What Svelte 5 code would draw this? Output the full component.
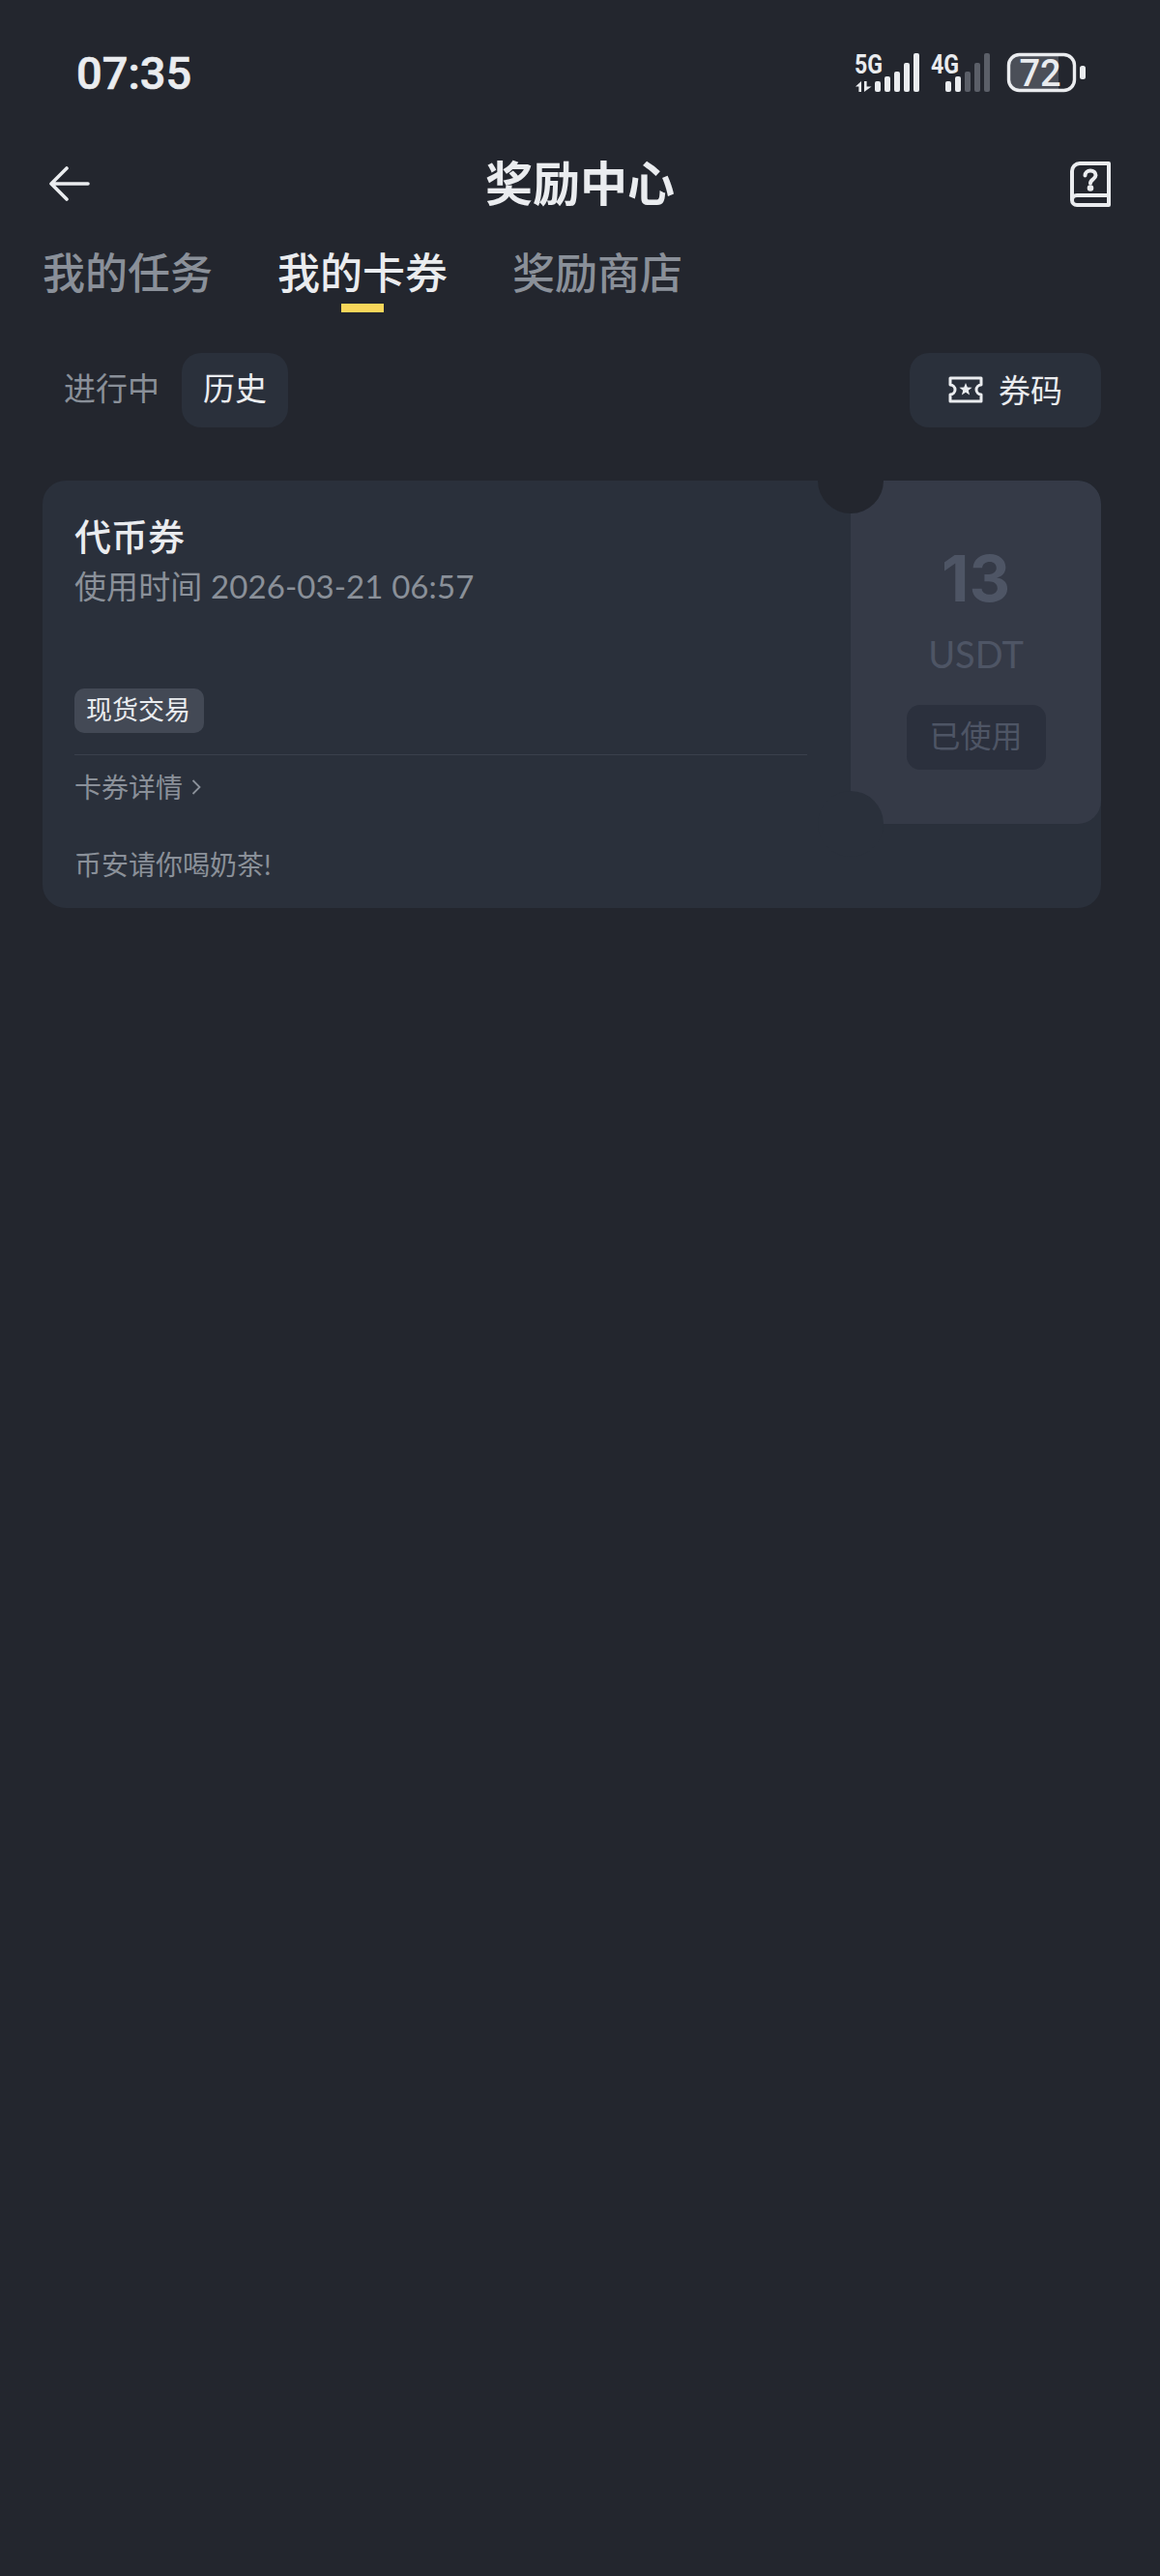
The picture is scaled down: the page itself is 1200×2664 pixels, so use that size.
<script>
	const tabs = [
		{ label: '我的任务', active: false },
		{ label: '我的卡券', active: true },
		{ label: '奖励商店', active: false }
	]
	const bars5g = [
		[905, 82],
		[915, 77],
		[925, 72],
		[935, 63],
		[945, 53]
	]
	const bars4g = [
		[978, 82, true],
		[988, 77, true],
		[998, 72, false],
		[1008, 63, false],
		[1018, 53, false]
	]
</script>

<div class="page">
	<div class="status">
		<span class="time">07:35</span>
		<svg class="status-icons" width="240" height="64" viewBox="884 41 240 64">
			<text x="884" y="74" class="net" textLength="29" lengthAdjust="spacingAndGlyphs">5G</text>
			<path d="M891 93h-2.600v-5.500h-3.400l6-5.500zM894 82h2.600v5.500h5l-7.600 5.500z" fill="#eaecef" />
			{#each bars5g as [x, y]}
				<rect {x} {y} width="6" height={93 - y} rx="2" fill="#eaecef" />
			{/each}
			<text x="963" y="74" class="net" textLength="29" lengthAdjust="spacingAndGlyphs">4G</text>
			{#each bars4g as [x, y, on]}
				<rect {x} {y} width="6" height={93 - y} rx="2" fill={on ? '#eaecef' : '#5b5f68'} />
			{/each}
			<path d="M1052 55h43v36h-43a8 8 0 0 1-8-8v-20a8 8 0 0 1 8-8z" fill="#4b4f58" />
			<rect x="1043.500" y="54.500" width="68" height="37" rx="11" fill="none" stroke="#eaecef" stroke-width="3.400" />
			<text x="1076" y="87" class="batt">72</text>
			<rect x="1117" y="66" width="6" height="14" rx="2.500" fill="#eaecef" />
		</svg>
	</div>

	<div class="nav">
		<svg class="nav-icon" width="42" height="36" viewBox="0 0 42 36" fill="none" stroke="#eaecef" stroke-width="3.600" stroke-linecap="round" stroke-linejoin="round">
			<path d="M40 18H3M18 2 2 18l16 16" />
		</svg>
		<h1>奖励中心</h1>
		<svg class="nav-icon" width="42" height="47" viewBox="0 0 42 47" fill="none" stroke="#eaecef" stroke-width="4" stroke-linejoin="round">
			<path d="M40 2H10a8 8 0 0 0-8 8v30a5 5 0 0 0 5 5h33zM2 40a5 5 0 0 1 5-5h33" />
			<path d="M15.500 14.500c0-3 2.400-5 5.500-5s5.500 2 5.500 4.800c0 4-5.500 4-5.500 8.200" stroke-linecap="round" />
			<circle cx="21" cy="27.500" r="1.300" fill="#eaecef" />
		</svg>
	</div>

	<div class="tabs">
		{#each tabs as tab}
			<div class="tab" class:active={tab.active}>{tab.label}</div>
		{/each}
	</div>

	<div class="filters">
		<div class="seg">
			<div class="seg-item">进行中</div>
			<div class="seg-item on">历史</div>
		</div>
		<div class="code-btn">
			<svg width="36" height="28" viewBox="0 0 36 28" fill="none" stroke="#eaecef" stroke-width="3" stroke-linejoin="round">
				<path d="M2 2h32v7a5 5 0 0 0 0 10v7H2v-7a5 5 0 0 0 0-10z" />
				<path d="m18 7 1.800 4.600 4.800.2-3.800 3 1.300 4.600-4.100-2.700-4.100 2.700 1.300-4.600-3.800-3 4.800-.2z" fill="#eaecef" stroke="none" />
			</svg>
			<span>券码</span>
		</div>
	</div>

	<div class="card">
		<div class="notch-top"></div>
		<div class="top">
			<div class="left">
				<div class="title">代币券</div>
				<div class="date">使用时间 2026-03-21 06:57</div>
				<div class="tag">现货交易</div>
				<div class="divider"></div>
				<div class="details">
					卡券详情
					<svg width="10" height="20" viewBox="0 0 10 20" fill="none" stroke="#8a9099" stroke-width="1.800">
						<path d="m1.500 3 7 7-7 7" />
					</svg>
				</div>
			</div>
			<div class="right">
				<div class="amount">13</div>
				<div class="unit">USDT</div>
				<div class="used">已使用</div>
				<div class="notch-bottom"></div>
			</div>
		</div>
		<div class="note">币安请你喝奶茶!</div>
	</div>
</div>

<style>
	:global(body) {
		margin: 0;
		background: #23262e;
	}

	.page {
		height: 2664px;
		background: #23262e;
		color: #eaecef;
		font-family: Lato, 'Noto Sans CJK SC', sans-serif;
		overflow: hidden;
	}

	.status {
		height: 150px;
		padding: 0 76px 0 79px;
		display: flex;
		align-items: center;
		justify-content: space-between;
	}

	.time {
		font-family: Roboto, sans-serif;
		font-size: 47px;
		font-weight: 500;
		-webkit-text-stroke: 0.6px #eaecef;
	}

	.net {
		font-family: Roboto, sans-serif;
		font-size: 28px;
		font-weight: 700;
		fill: #eaecef;
	}

	.batt {
		font-family: Roboto, sans-serif;
		font-size: 38px;
		font-weight: 500;
		fill: #eaecef;
		text-anchor: middle;
	}

	.nav {
		height: 78px;
		padding: 0 51px;
		display: flex;
		align-items: center;
		justify-content: space-between;
	}

	.nav-icon {
		margin-top: 2px;
	}

	h1 {
		margin: 0;
		font-size: 49px;
		font-weight: 700;
		line-height: 78px;
	}

	.tabs {
		margin-top: 24px;
		padding-left: 44px;
		display: flex;
		gap: 67px;
	}

	.tab {
		position: relative;
		font-size: 44px;
		line-height: 60px;
		font-weight: 500;
		color: #8a9099;
	}

	.tab.active {
		color: #eaecef;
	}

	.tab.active::after {
		content: '';
		position: absolute;
		left: 66px;
		top: 62px;
		width: 44px;
		height: 9px;
		background: #f8d65a;
	}

	.filters {
		margin-top: 53px;
		padding: 0 61px 0 44px;
		display: flex;
		justify-content: space-between;
	}

	.seg {
		display: flex;
		gap: 1px;
	}

	.seg-item {
		height: 77px;
		padding: 0 22px;
		font-size: 33px;
		line-height: 72px;
		color: #8a9099;
	}

	.seg-item.on {
		color: #eaecef;
		background: #2a303b;
		border-radius: 20px;
	}

	.code-btn {
		width: 198px;
		height: 77px;
		box-sizing: border-box;
		padding-bottom: 2px;
		display: flex;
		align-items: center;
		justify-content: center;
		gap: 16px;
		background: #2a303b;
		border-radius: 20px;
		font-size: 33px;
	}

	.code-btn span {
		margin-bottom: 2px;
	}

	.card {
		position: relative;
		margin: 55px 61px 0 44px;
		height: 442px;
		background: #2a303b;
		border-radius: 24px;
		overflow: hidden;
	}

	.notch-top {
		position: absolute;
		z-index: 2;
		left: 802px;
		top: -34px;
		width: 68px;
		height: 68px;
		border-radius: 50%;
		background: #23262e;
	}

	.top {
		height: 355px;
		display: flex;
	}

	.left {
		width: 836px;
		box-sizing: border-box;
		padding: 32px 45px 0 33px;
	}

	.title {
		font-size: 38px;
		line-height: 50px;
		font-weight: 500;
	}

	.date {
		margin-top: 5px;
		font-size: 33px;
		line-height: 44px;
		letter-spacing: 0.1px;
		color: #8a9099;
	}

	.tag {
		margin-top: 84px;
		width: 134px;
		height: 46px;
		box-sizing: border-box;
		padding-left: 12px;
		background: #434955;
		border-radius: 10px;
		font-size: 27px;
		line-height: 44px;
		white-space: nowrap;
	}

	.divider {
		margin-top: 22px;
		height: 1px;
		background: #3a404c;
	}

	.details {
		margin-top: 13px;
		display: flex;
		align-items: center;
		gap: 9px;
		font-size: 28px;
		line-height: 40px;
		color: #8a9099;
	}

	.right {
		position: relative;
		flex: 1;
		padding-top: 61px;
		background: #353a47;
		border-radius: 0 24px 24px 0;
		display: flex;
		flex-direction: column;
		align-items: center;
		color: #4e5565;
	}

	.amount {
		font-family: Inter, sans-serif;
		font-size: 66px;
		line-height: 80px;
		font-weight: 700;
	}

	.unit {
		margin-top: 14px;
		font-size: 38px;
		line-height: 48px;
	}

	.used {
		margin-top: 29px;
		width: 144px;
		height: 67px;
		background: #2b303d;
		border-radius: 14px;
		text-align: center;
		font-size: 32px;
		line-height: 64px;
	}

	.notch-bottom {
		position: absolute;
		left: -34px;
		bottom: -34px;
		width: 68px;
		height: 68px;
		border-radius: 50%;
		background: #2a303b;
	}

	.note {
		padding-left: 33px;
		font-size: 28px;
		line-height: 85px;
		color: #8a9099;
	}
</style>
